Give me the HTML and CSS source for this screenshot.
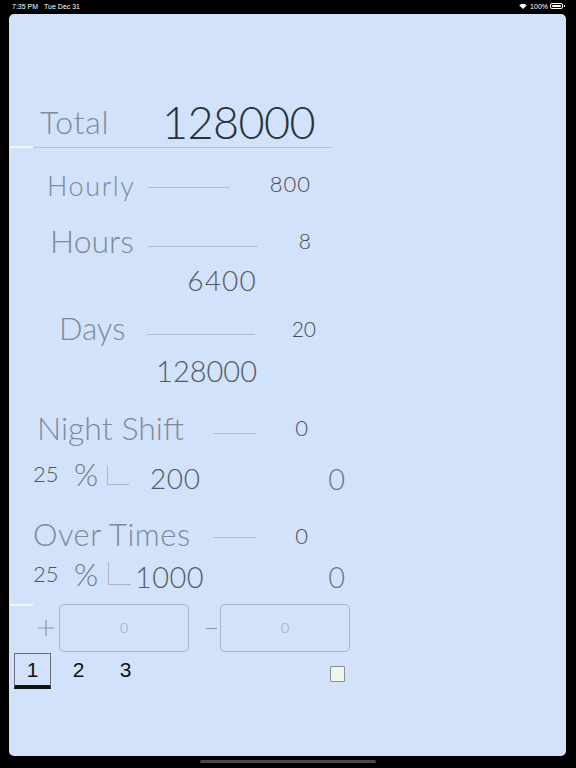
FILE: index.html
```html
<!DOCTYPE html>
<html lang="en">
<head>
<meta charset="utf-8">
<title>Salary</title>
<link rel="stylesheet" href="styles.css">
</head>
<body>
<div class="status">
  <div class="status-left"><span class="time">7:35 PM</span><span class="date">Tue Dec 31</span></div>
  <div class="status-right">
    <svg class="wifi" width="8" height="6" viewBox="0 0 8 6"><path d="M4 6 L0.2 2.2 A5.4 5.4 0 0 1 7.8 2.2 Z" fill="#fff"/></svg>
    <span class="batt-text">100%</span>
    <span class="battery"><span class="battery-fill"></span></span><span class="battery-nub"></span>
  </div>
</div>
<main class="panel">
  <div class="row r-total">
    <span class="lbl lbl-total">Total</span>
    <span class="num num-total">128000</span>
  </div>
  <div class="row r-underline">
    <span class="white-bar"></span>
    <span class="underline"></span>
  </div>
  <div class="row r-hourly">
    <span class="lbl lbl-hourly">Hourly</span>
    <span class="rule rule-hourly"></span>
    <span class="val val-hourly">800</span>
  </div>
  <div class="row r-hours">
    <span class="lbl lbl-hours">Hours</span>
    <span class="rule rule-hours"></span>
    <span class="val val-hours">8</span>
  </div>
  <div class="row r-sub1">
    <span class="sub sub-6400">6400</span>
  </div>
  <div class="row r-days">
    <span class="lbl lbl-days">Days</span>
    <span class="rule rule-days"></span>
    <span class="val val-days">20</span>
  </div>
  <div class="row r-sub2">
    <span class="sub sub-128">128000</span>
  </div>
  <div class="row r-night">
    <span class="lbl lbl-night">Night Shift</span>
    <span class="rule rule-short"></span>
    <span class="val val-zero">0</span>
  </div>
  <div class="row r-pct1">
    <span class="pct-num">25</span>
    <span class="pct-sign">%</span>
    <span class="bracket bracket-1"></span>
    <span class="amt amt-200">200</span>
    <span class="res res-1">0</span>
  </div>
  <div class="row r-over">
    <span class="lbl lbl-over">Over Times</span>
    <span class="rule rule-short rule-over"></span>
    <span class="val val-zero">0</span>
  </div>
  <div class="row r-pct2">
    <span class="pct-num">25</span>
    <span class="pct-sign pct-sign-2">%</span>
    <span class="bracket bracket-2"></span>
    <span class="amt amt-1000">1000</span>
    <span class="res res-2">0</span>
  </div>
  <div class="row r-inputs">
    <span class="white-bar white-bar-2"></span>
    <svg class="plus" width="16" height="16" viewBox="0 0 16 16"><path d="M0 8 H16 M8 0 V16" stroke="#8b949f" stroke-width="1.2" fill="none"/></svg>
    <div class="field field-1">0</div>
    <span class="minus"></span>
    <div class="field field-2">0</div>
  </div>
  <div class="row r-tabs">
    <div class="tab tab-active">1</div>
    <div class="tab tab-2">2</div>
    <div class="tab tab-3">3</div>
    <span class="check"></span>
  </div>
</main>
<div class="home-indicator"></div>
</body>
</html>
```
FILE: styles.css
```css
* { box-sizing: border-box; }
html, body {
  margin: 0;
  padding: 0;
  background: #000;
  width: 576px;
  height: 768px;
  overflow: hidden;
}
body {
  font-family: "Lato", "Open Sans", sans-serif;
}

/* status bar */
.status {
  height: 14px;
  display: flex;
  justify-content: space-between;
  align-items: center;
  padding: 0 11px 2px 12px;
  color: #fff;
  font-family: "Liberation Sans", Arial, sans-serif;
  font-size: 7px;
  line-height: 1;
}
.status-left { display: flex; gap: 6px; }
.status-right { display: flex; align-items: center; }
.wifi { margin-right: 3px; }
.batt-text { margin-right: 2px; }
.battery {
  width: 13px;
  height: 6px;
  border: 1px solid #fff;
  border-radius: 2px;
  padding: 1px;
  display: flex;
}
.battery-fill { flex: 1; background: #fff; border-radius: 1px; }
.battery-nub { width: 1px; height: 2px; background: #fff; margin-left: 1px; }

/* panel */
.panel {
  margin-left: 9px;
  width: 557px;
  height: 742px;
  background: #d1e2fa;
  border-radius: 5px;
  padding-top: 88px;
  display: flex;
  flex-direction: column;
}
.row {
  display: flex;
  align-items: center;
  flex: none;
}
.row > * { flex: none; }

.lbl {
  color: #808a96;
  font-weight: 300;
  line-height: 1;
  white-space: nowrap;
}
.num, .val, .sub, .amt, .res, .pct-num, .pct-sign {
  line-height: 1;
  font-weight: 300;
  white-space: nowrap;
}

.r-total { height: 40px; }
.lbl-total { margin-left: 31px; width: 100px; font-size: 32px; letter-spacing: 0.7px; }
.num-total { width: 175px; text-align: right; font-size: 45px; letter-spacing: -0.6px; color: #2c323a; }

.r-underline { height: 2px; margin-top: 4px; align-items: flex-start; }
.white-bar { margin-left: 1px; width: 23px; height: 2px; background: #f4f8ff; }
.underline { width: 299px; height: 1px; margin-top: 1px; background: #b3c1d3; }

.rule { height: 1px; background: #aebcce; align-self: flex-start; }
.val { text-align: right; color: #4a4f56; }

.r-hourly { height: 36px; margin-top: 18px; }
.lbl-hourly { margin-left: 38px; width: 101px; font-size: 27px; letter-spacing: 1.6px; margin-top: 3px; }
.rule-hourly { width: 82px; margin-top: 21px; }
.val-hourly { width: 81px; font-size: 22px; letter-spacing: 1px; }

.r-hours { height: 37px; margin-top: 20px; }
.lbl-hours { margin-left: 41px; width: 98px; font-size: 32px; }
.rule-hours { width: 110px; margin-top: 24px; }
.val-hours { width: 53px; font-size: 21px; }

.sub { width: 248px; text-align: right; color: #555b63; }
.r-sub1 { height: 31px; margin-top: 5px; }
.sub-6400 { font-size: 28px; letter-spacing: 1.2px; }

.r-days { height: 36px; margin-top: 15px; }
.lbl-days { margin-left: 50px; width: 89px; font-size: 31px; }
.rule-days { width: 108px; margin-top: 24px; margin-left: -1px; }
.val-days { width: 61px; font-size: 21px; }

.r-sub2 { height: 31px; margin-top: 9px; }
.sub-128 { font-size: 29px; }

.r-night { height: 37px; margin-top: 23px; }
.lbl-night { margin-left: 28px; width: 176px; font-size: 32px; }
.rule-short { width: 43px; margin-top: 24px; }
.val-zero { width: 52px; font-size: 22px; }

.r-pct1 { height: 36px; margin-top: 10px; }
.pct-num { margin-left: 24px; width: 41px; font-size: 22px; color: #50565e; }
.pct-sign { width: 33px; font-size: 31px; color: #717a85; }
.pct-sign-2 { width: 34px; }
.bracket {
  align-self: flex-start;
  border-left: 1px solid #aab7c9;
  border-bottom: 1px solid #aab7c9;
}
.bracket-1 { width: 22px; height: 20px; margin-top: 9px; }
.bracket-2 { width: 23px; height: 23px; margin-top: 6px; }
.amt { font-size: 28px; color: #575d65; width: 60px; }
.amt-200 { margin-left: 21px; margin-top: 8px; letter-spacing: 0.6px; }
.res { width: 135px; text-align: right; font-size: 29px; color: #707983; }
.res-1 { margin-top: 9px; }

.r-over { height: 37px; margin-top: 25px; }
.lbl-over { margin-left: 24px; width: 180px; font-size: 31px; letter-spacing: 0.5px; margin-top: -2px; }
.rule-over { margin-top: 20px; }

.r-pct2 { height: 36px; margin-top: 2px; }
.amt-1000 { margin-left: 4px; width: 75px; font-size: 29px; margin-top: 4px; letter-spacing: 0.4px; }
.res-2 { width: 135px; margin-top: 5px; }

.r-inputs { height: 48px; margin-top: 12px; }
.white-bar-2 { align-self: flex-start; }
.plus { margin-left: 5px; }
.field {
  width: 130px;
  height: 48px;
  border: 1px solid #a9b6c8;
  border-radius: 5px;
  display: flex;
  align-items: center;
  justify-content: center;
  font-size: 14px;
  font-weight: 300;
  color: #99a0a9;
  padding-bottom: 1px;
}
.field-1 { margin-left: 5px; }
.minus { width: 11px; height: 1px; background: #8b949f; margin-left: 17px; }
.field-2 { margin-left: 3px; }

.r-tabs { height: 36px; margin-top: 1px; align-items: flex-start; }
.tab {
  width: 37px;
  height: 32px;
  display: flex;
  align-items: center;
  justify-content: center;
  font-family: "Liberation Sans", Arial, sans-serif;
  font-size: 21px;
  color: #111;
  padding-top: 1px;
}
.tab-active {
  margin-left: 5px;
  height: 36px;
  border: 1px solid #6c6f74;
  border-bottom: 4px solid #111;
  padding-top: 0;
}
.tab-2 { margin-left: 9px; }
.tab-3 { margin-left: 10px; }
.check {
  margin-left: 186px;
  margin-top: 13px;
  width: 15px;
  height: 16px;
  background: #eef6e9;
  border: 1px solid #8d8f92;
  border-radius: 1px;
}

.home-indicator {
  width: 176px;
  height: 3px;
  margin: 4px 0 0 200px;
  background: #484848;
  border-radius: 2px;
}
```
